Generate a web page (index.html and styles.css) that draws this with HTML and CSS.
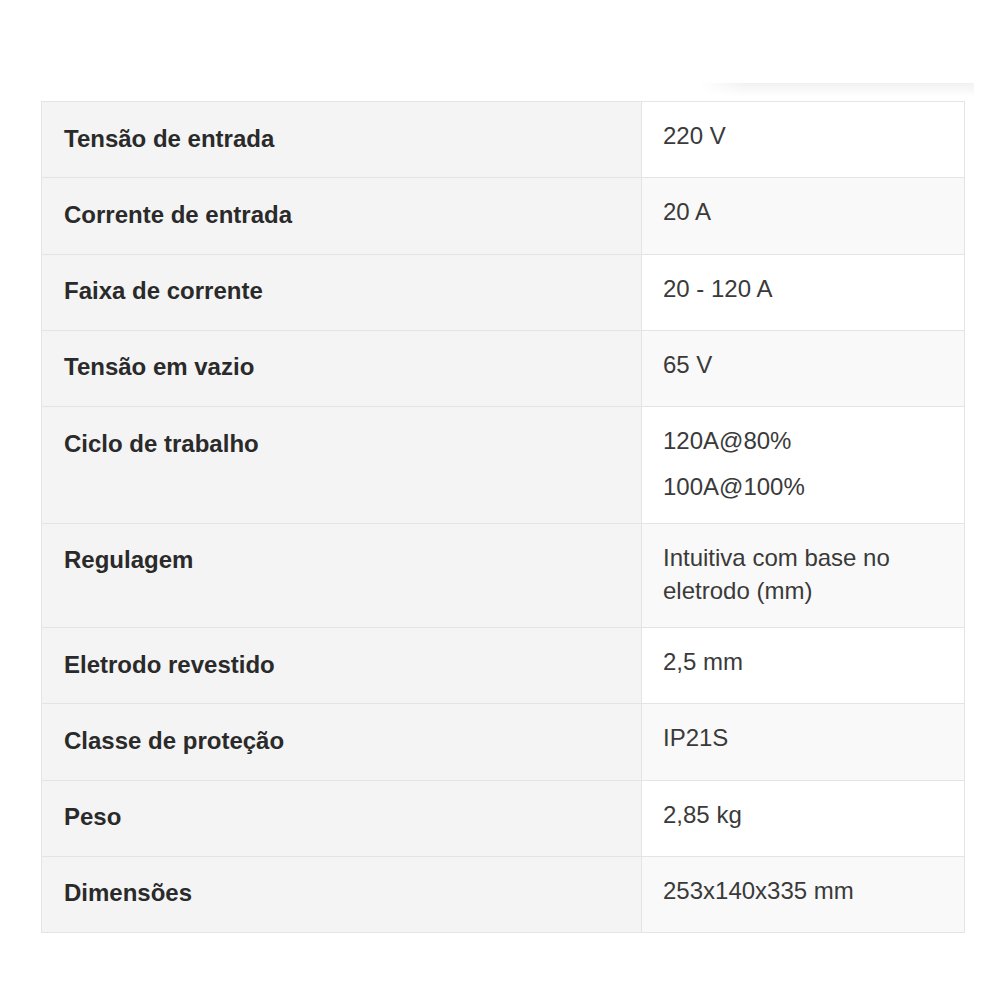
FILE: index.html
```html
<!DOCTYPE html>
<html lang="pt-BR">
<head>
<meta charset="utf-8">
<title>Especificações</title>
<link rel="stylesheet" href="styles.css">
</head>
<body>
<div class="page">
  <div class="shade"></div>
  <table class="specs">
    <colgroup><col class="c-label"><col class="c-value"></colgroup>
    <tbody>
      <tr><td class="label">Tensão de entrada</td><td class="value">220 V</td></tr>
      <tr><td class="label">Corrente de entrada</td><td class="value">20 A</td></tr>
      <tr><td class="label">Faixa de corrente</td><td class="value">20 - 120 A</td></tr>
      <tr><td class="label">Tensão em vazio</td><td class="value">65 V</td></tr>
      <tr><td class="label">Ciclo de trabalho</td><td class="value"><p class="para">120A@80%</p><p class="para">100A@100%</p></td></tr>
      <tr><td class="label">Regulagem</td><td class="value">Intuitiva com base no eletrodo (mm)</td></tr>
      <tr><td class="label">Eletrodo revestido</td><td class="value">2,5 mm</td></tr>
      <tr><td class="label">Classe de proteção</td><td class="value">IP21S</td></tr>
      <tr><td class="label">Peso</td><td class="value">2,85 kg</td></tr>
      <tr><td class="label">Dimensões</td><td class="value">253x140x335 mm</td></tr>
    </tbody>
  </table>
</div>
</body>
</html>
```
FILE: styles.css
```css
html, body {
  margin: 0;
  padding: 0;
  background: #ffffff;
}

.page {
  padding-top: 83px;
  font-family: "Liberation Sans", Arial, sans-serif;
  color: #333333;
}

.shade {
  margin-left: 700px;
  width: 274px;
  height: 14px;
  background: linear-gradient(to bottom, rgba(0, 0, 0, 0.055), rgba(0, 0, 0, 0));
  -webkit-mask-image: linear-gradient(to right, transparent 0, #000 45px);
  mask-image: linear-gradient(to right, transparent 0, #000 45px);
}

.specs {
  margin-top: 4px;
  margin-left: 41px;
  width: 923px;
  table-layout: fixed;
  border-collapse: collapse;
  border: 1px solid #e4e4e4;
  font-size: 24px;
}

.c-label { width: 600px; }
.c-value { width: 323px; }

.specs td {
  border: 1px solid #e4e4e4;
  vertical-align: top;
}

.label {
  background: #f4f4f4;
  font-weight: bold;
  color: #2a2a2a;
  padding: 17.5px 22px 20.2px;
  line-height: 37.6px;
}

.value {
  background: #ffffff;
  padding: 17px 20px 19px 21px;
  line-height: 33.6px;
  color: #3a3a3a;
}

.specs tr:nth-child(even) .value {
  background: #f9f9f9;
}

.para {
  margin: 0;
}

.para + .para {
  margin-top: 12.5px;
}
```
